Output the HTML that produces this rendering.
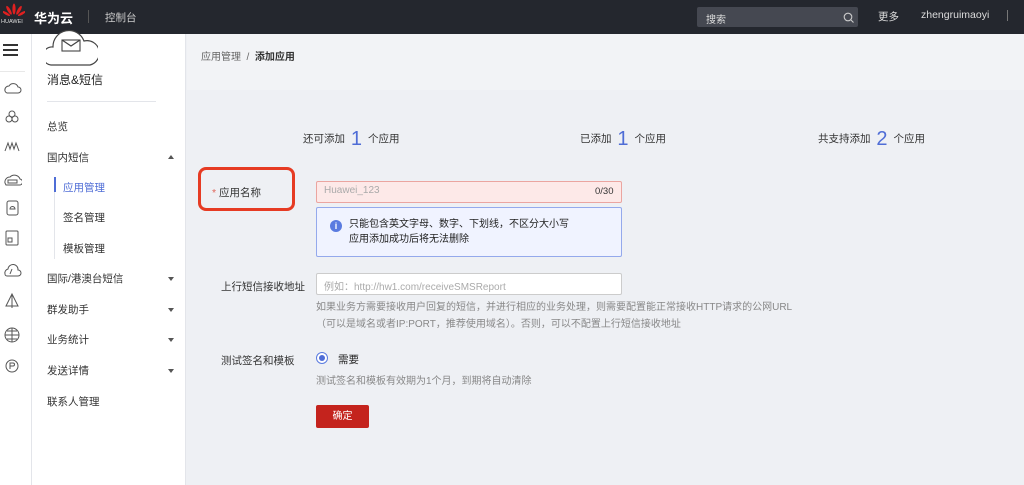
<!DOCTYPE html><html><head><meta charset="utf-8"><style>
*{margin:0;padding:0;box-sizing:border-box}
body{width:1024px;height:485px;overflow:hidden;font-family:"Liberation Sans","Noto Sans CJK SC",sans-serif;font-size:11px;color:#333;background:#eef0f4;position:relative}
.a{position:absolute}
.top{left:0;top:0;width:1024px;height:34px;background:#24272e;color:#fff}
.rail{left:0;top:34px;width:32px;height:451px;background:#fff;border-right:1px solid #e3e5ea}
.side{left:32px;top:34px;width:154px;height:451px;background:#fff;border-right:1px solid #e3e5ea}
.mi{position:absolute;left:15px;font-size:10.5px;color:#333}
.tri{position:absolute;left:136px;width:0;height:0;border-left:3.5px solid transparent;border-right:3.5px solid transparent}
.dn{border-top:4px solid #555}.up{border-bottom:4px solid #555}
.lbl{font-size:10.5px;color:#333}
.hint{font-size:10px;color:#888;line-height:17px}
</style></head><body>
<div class="a top">
 <svg class="a" style="left:3px;top:3px" width="22" height="16" viewBox="0 0 22 16"><g fill="#e02020"><ellipse cx="11" cy="6" rx="1.6" ry="5.5"/><ellipse cx="7" cy="7" rx="1.5" ry="5" transform="rotate(-30 7 9)"/><ellipse cx="15" cy="7" rx="1.5" ry="5" transform="rotate(30 15 9)"/><ellipse cx="4" cy="10" rx="1.3" ry="4.5" transform="rotate(-60 4 11)"/><ellipse cx="18" cy="10" rx="1.3" ry="4.5" transform="rotate(60 18 11)"/></g></svg>
 <div class="a" style="left:1px;top:19px;font-size:5.5px;color:#ddd">HUAWEI</div>
 <div class="a" style="left:34px;top:8px;font-size:13px;font-weight:bold">华为云</div>
 <div class="a" style="left:88px;top:10px;width:1px;height:13px;background:#555"></div>
 <div class="a" style="left:105px;top:10px;font-size:10.5px;color:#ccc">控制台</div>
 <div class="a" style="left:697px;top:7px;width:161px;height:20px;background:#454851;border-radius:2px"></div>
 <div class="a" style="left:706px;top:11px;font-size:10px;color:#ddd">搜索</div>
 <svg class="a" style="left:843px;top:12px" width="11" height="11"><circle cx="5" cy="5" r="3.8" stroke="#ccc" fill="none" stroke-width="1.1"/><line x1="8" y1="8" x2="10.5" y2="10.5" stroke="#ccc" stroke-width="1.1"/></svg>
 <div class="a" style="left:878px;top:9px;font-size:10.5px;color:#ddd">更多</div>
 <div class="a" style="left:921px;top:9px;font-size:10.5px;color:#ddd">zhengruimaoyi</div>
 <div class="a" style="left:1007px;top:10px;width:1px;height:11px;background:#777"></div>
</div>
<div class="a rail">
 <div class="a" style="left:3px;top:10px;width:15px;height:2px;background:#333;box-shadow:0 5px #333,0 10px #333"></div>
 <div class="a" style="left:0;top:37px;width:25px;height:1px;background:#e8e8e8"></div>
 <svg class="a" style="left:2px;top:45px" width="20" height="330" fill="none" stroke="#555" stroke-width="1">
  <path d="M3 12a4 4 0 0 1 4-5a5 5 0 0 1 9 1a3 3 0 0 1 0 6H5a3 3 0 0 1-2-2z"/>
  <circle cx="10" cy="35" r="3"/><circle cx="7" cy="40" r="3"/><circle cx="13" cy="40" r="3"/>
  <path d="M3 72l3-8 2 6 2-6 2 6 2-6 3 8"/>
  <path d="M3 104a5 5 0 0 1 5-6a6 6 0 0 1 10 2a3 3 0 0 1-1 6H4z"/><rect x="6" y="101" width="9" height="3"/>
  <rect x="5" y="122" width="11" height="14" rx="2"/><path d="M8 130a2 2 0 0 1 5 0z"/>
  <rect x="4" y="152" width="12" height="14" rx="1"/><rect x="6" y="159" width="4" height="4"/>
  <path d="M3 195a4 4 0 0 1 3-5a5 5 0 0 1 10 1a3 3 0 0 1 0 6H5a2 2 0 0 1-2-2z"/><path d="M10 190l-2 5"/>
  <path d="M10 215l-6 12h12zM10 215v14"/>
  <circle cx="10" cy="256" r="7"/><path d="M3 256h14M10 249v14M5 252h10M5 260h10"/>
  <circle cx="10" cy="287" r="6"/><path d="M8 290v-6h3a1.5 1.5 0 0 1 0 3H8"/>
 </svg>
</div>
<div class="a side">
 <svg class="a" style="left:14px;top:-8px" width="52" height="42" fill="none" stroke="#444" stroke-width="1.2"><path d="M5 39a9 9 0 0 1 2-18a16 16 0 0 1 31-6a11 11 0 0 1 6 24z" fill="#fff"/><rect x="16" y="14" width="18" height="11" stroke-width="1.1"/><path d="M16 14l9 6 9-6"/></svg>
 <div class="a" style="left:15px;top:37px;font-size:12px;color:#222">消息&amp;短信</div>
 <div class="a" style="left:15px;top:67px;width:109px;height:1px;background:#e3e5ea"></div>
 <div class="mi" style="top:85px">总览</div>
 <div class="mi" style="top:116px">国内短信</div><div class="tri up" style="top:121px"></div>
 <div class="a" style="left:22px;top:143px;width:1px;height:82px;background:#e3e5ea"></div>
 <div class="a" style="left:22px;top:143px;width:2px;height:15px;background:#4f6dd6"></div>
 <div class="mi" style="left:31px;top:146px;color:#4f6dd6">应用管理</div>
 <div class="mi" style="left:31px;top:176px">签名管理</div>
 <div class="mi" style="left:31px;top:207px">模板管理</div>
 <div class="mi" style="top:237px">国际/港澳台短信</div><div class="tri dn" style="top:243px"></div>
 <div class="mi" style="top:268px">群发助手</div><div class="tri dn" style="top:274px"></div>
 <div class="mi" style="top:298px">业务统计</div><div class="tri dn" style="top:304px"></div>
 <div class="mi" style="top:329px">发送详情</div><div class="tri dn" style="top:335px"></div>
 <div class="mi" style="top:360px">联系人管理</div>
</div>
<div class="a" style="left:187px;top:34px;width:837px;height:56px;background:#f2f3f6"></div>
<div class="a" style="left:201px;top:48px;font-size:10px;color:#666">应用管理 &nbsp;/&nbsp; <b style="color:#333">添加应用</b></div>
<div class="a lbl" style="left:303px;top:128px">还可添加 <span style="font-size:20px;color:#4f6dd6;vertical-align:-3px;margin:0 3px">1</span> 个应用</div>
<div class="a lbl" style="left:580px;top:128px">已添加 <span style="font-size:20px;color:#4f6dd6;vertical-align:-3px;margin:0 3px">1</span> 个应用</div>
<div class="a lbl" style="left:818px;top:128px">共支持添加 <span style="font-size:20px;color:#4f6dd6;vertical-align:-3px;margin:0 3px">2</span> 个应用</div>
<div class="a" style="left:198px;top:167px;width:97px;height:44px;border:3px solid #e63b23;border-radius:8px"></div>
<div class="a lbl" style="left:212px;top:185px"><span style="color:#e0655a">*</span> 应用名称</div>
<div class="a" style="left:316px;top:181px;width:306px;height:22px;background:#fde9e8;border:1px solid #eba5a0;border-radius:2px"></div>
<div class="a" style="left:324px;top:185px;font-size:10px;color:#aaa">Huawei_123</div>
<div class="a" style="left:595px;top:186px;font-size:9.5px;color:#333">0/30</div>
<div class="a" style="left:316px;top:207px;width:306px;height:50px;background:#f0f3ff;border:1px solid #94a9ec;border-radius:2px"></div>
<div class="a" style="left:330px;top:220px;width:12px;height:12px;border-radius:50%;background:#5a7be0;color:#fff;font-size:9px;font-weight:bold;text-align:center;line-height:12px">i</div>
<div class="a" style="left:349px;top:217px;font-size:10px;line-height:15px;color:#222">只能包含英文字母、数字、下划线，不区分大小写<br>应用添加成功后将无法删除</div>
<div class="a lbl" style="left:221px;top:279px">上行短信接收地址</div>
<div class="a" style="left:316px;top:273px;width:306px;height:22px;background:#fff;border:1px solid #ccc;border-radius:2px"></div>
<div class="a" style="left:324px;top:278px;font-size:10px;color:#aaa">例如：http://hw1.com/receiveSMSReport</div>
<div class="a hint" style="left:316px;top:299px">如果业务方需要接收用户回复的短信，并进行相应的业务处理，则需要配置能正常接收HTTP请求的公网URL<br>（可以是域名或者IP:PORT，推荐使用域名）。否则，可以不配置上行短信接收地址</div>
<div class="a lbl" style="left:221px;top:353px">测试签名和模板</div>
<div class="a" style="left:316px;top:352px;width:12px;height:12px;border:1px solid #5a7be0;border-radius:50%;background:#fff"></div>
<div class="a" style="left:319px;top:355px;width:6px;height:6px;border-radius:50%;background:#4f6dd6"></div>
<div class="a" style="left:338px;top:352px;font-size:10.5px;color:#222">需要</div>
<div class="a hint" style="left:316px;top:373px">测试签名和模板有效期为1个月，到期将自动清除</div>
<div class="a" style="left:316px;top:405px;width:53px;height:23px;background:#c4231d;border-radius:2px;color:#fff;font-size:10px;text-align:center;line-height:23px">确定</div>
</body></html>
